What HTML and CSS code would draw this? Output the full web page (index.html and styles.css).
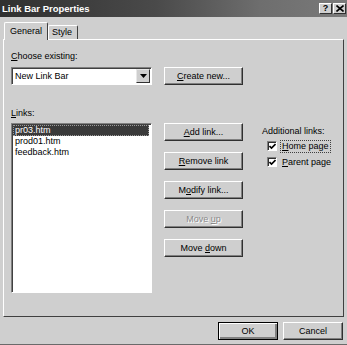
FILE: index.html
```html
<!DOCTYPE html>
<html lang="en">
<head>
    <meta charset="UTF-8">
    <title>Link Bar Properties</title>
    <link rel="stylesheet" href="styles.css">
</head>
<body>
    <div class="dialog">
        <!-- Title bar -->
        <div class="titlebar">
            <span class="title">Link Bar Properties</span>
            <div class="caption-btns">
                <span class="cap-btn">?</span>
                <span class="cap-btn close">
                    <svg width="8" height="7" viewBox="0 0 8 7"><path d="M0.5 0.5 L7.5 6.5 M7.5 0.5 L0.5 6.5" stroke="#000" stroke-width="1.6"/></svg>
                </span>
            </div>
        </div>

        <!-- Tabs -->
        <div class="tabs">
            <div class="tab active">General</div>
            <div class="tab">Style</div>
        </div>

        <div class="panel">
            <div class="label"><u>C</u>hoose existing:</div>
            <div class="spacer"></div>

            <div class="combo">
                <span class="combo-text">New Link Bar</span>
                <span class="combo-btn">
                    <svg width="7" height="4" viewBox="0 0 7 4"><path d="M0 0 H7 L3.5 4 Z" fill="#000"/></svg>
                </span>
            </div>
            <button class="btn create"><u>C</u>reate new...</button>

            <div class="label links-label"><u>L</u>inks:</div>
            <div class="spacer"></div>

            <div class="listbox">
                <div class="list-item selected">pr03.htm</div>
                <div class="list-item">prod01.htm</div>
                <div class="list-item">feedback.htm</div>
            </div>

            <div class="btn-col">
                <button class="btn"><u>A</u>dd link...</button>
                <button class="btn"><u>R</u>emove link</button>
                <button class="btn">M<u>o</u>dify link...</button>
                <button class="btn disabled">Move <u>u</u>p</button>
                <button class="btn">Move <u>d</u>own</button>
            </div>

            <div class="extra">
                <div class="extra-title">Additional links:</div>
                <div class="check-row">
                    <span class="checkbox">
                        <svg width="7" height="7" viewBox="0 0 7 7"><path d="M0.5 3 L2.5 5 L6.5 1" stroke="#000" stroke-width="1.6" fill="none"/></svg>
                    </span>
                    <span class="check-label focus"><u>H</u>ome page</span>
                </div>
                <div class="check-row">
                    <span class="checkbox">
                        <svg width="7" height="7" viewBox="0 0 7 7"><path d="M0.5 3 L2.5 5 L6.5 1" stroke="#000" stroke-width="1.6" fill="none"/></svg>
                    </span>
                    <span class="check-label"><u>P</u>arent page</span>
                </div>
            </div>
        </div>

        <!-- Footer buttons -->
        <div class="footer">
            <button class="btn default">OK</button>
            <button class="btn">Cancel</button>
        </div>
    </div>
</body>
</html>
```

FILE: styles.css
```css
body {
    margin: 0;
    font-family: "Liberation Sans", Arial, sans-serif;
    font-size: 9px;
    color: #000;
    background: #cfcfcf;
}
u {
    text-decoration: underline;
    text-underline-offset: 1px;
}
.dialog {
    width: 347px;
    height: 345px;
    box-sizing: border-box;
    background: #cfcfcf;
    border-bottom: 1px solid #6a6a6a;
}
.titlebar {
    height: 17px;
    display: flex;
    align-items: center;
    justify-content: space-between;
    background: linear-gradient(90deg, #303030, #4a4a4a 45%, #6e6e6e 75%, #7a7a7a);
}
.title {
    color: #fff;
    font-weight: bold;
    font-size: 9.5px;
    padding-left: 2px;
}
.caption-btns {
    display: flex;
    gap: 1px;
    padding-right: 1px;
}
.cap-btn {
    width: 13px;
    height: 11px;
    box-sizing: border-box;
    background: #cfcfcf;
    border: 1px solid;
    border-color: #fff #303030 #303030 #fff;
    font-weight: bold;
    font-size: 9px;
    line-height: 9px;
    text-align: center;
    display: flex;
    align-items: center;
    justify-content: center;
}
.tabs {
    display: flex;
    align-items: flex-end;
    padding: 6px 0 0 4px;
    height: 16px;
    position: relative;
    z-index: 1;
}
.tab {
    border: 1px solid;
    border-color: #fff #404040 transparent #fff;
    border-bottom: none;
    border-radius: 2px 2px 0 0;
    height: 14px;
    box-sizing: border-box;
    padding: 0 5px 0 3px;
    line-height: 13px;
    background: #cfcfcf;
}
.tab.active {
    height: 18px;
    padding: 0 5px;
    line-height: 16px;
    margin-bottom: -1px;
    border-right: 1px solid #404040;
}
.panel {
    margin: 0 3px;
    height: 278px;
    box-sizing: border-box;
    border: 1px solid;
    border-color: #fff #404040 #404040 #fff;
    padding: 10px 0 0 7px;
    display: grid;
    grid-template-columns: 141px 79px auto;
    grid-template-rows: 13px 19px 13px auto;
    column-gap: 12px;
    align-items: start;
}
.label {
    line-height: 13px;
}
.spacer {
    grid-column: 2 / 4;
}
.combo {
    margin-top: 4px;
    height: 18px;
    box-sizing: border-box;
    background: #fff;
    border: 1px solid;
    border-color: #808080 #fff #fff #808080;
    box-shadow: inset 1px 1px #404040;
    display: flex;
    align-items: center;
    justify-content: space-between;
    padding: 0 1px 0 3px;
}
.combo-btn {
    width: 14px;
    height: 14px;
    box-sizing: border-box;
    background: #cfcfcf;
    border: 1px solid;
    border-color: #e8e8e8 #303030 #303030 #e8e8e8;
    display: flex;
    align-items: center;
    justify-content: center;
}
.btn {
    font: inherit;
    color: #000;
    width: 79px;
    height: 18px;
    padding: 0;
    background: #cfcfcf;
    border: 1px solid;
    border-color: #fff #303030 #303030 #fff;
    box-shadow: inset -1px -1px #808080;
    text-align: center;
}
.btn.create {
    margin-top: 4px;
}
.btn.disabled {
    color: #8a8a8a;
    text-shadow: 1px 1px #fff;
}
.links-label {
    grid-row: 3;
    margin-top: 25px;
}
.listbox {
    grid-row: 4;
    margin-top: 28px;
    height: 170px;
    box-sizing: border-box;
    background: #fff;
    border: 1px solid;
    border-color: #808080 #fff #fff #808080;
    box-shadow: inset 1px 1px #404040;
    padding: 1px 2px 0 1px;
}
.list-item {
    line-height: 11px;
    padding-left: 2px;
}
.list-item.selected {
    background: #3a3a3a;
    color: #fff;
    outline: 1px dotted #9a9a9a;
    outline-offset: -1px;
}
.btn-col {
    grid-row: 4;
    margin-top: 28px;
    display: flex;
    flex-direction: column;
    gap: 11px;
}
.extra {
    grid-row: 4;
    margin: 30px 0 0 7px;
}
.extra-title {
    line-height: 13px;
}
.check-row {
    display: flex;
    align-items: center;
    height: 16px;
    padding-left: 5px;
    gap: 4px;
}
.checkbox {
    width: 10px;
    height: 10px;
    box-sizing: border-box;
    background: #fff;
    border: 1px solid;
    border-color: #808080 #fff #fff #808080;
    box-shadow: inset 1px 1px #303030;
    display: flex;
    align-items: center;
    justify-content: center;
}
.check-label {
    padding: 0 1px;
    line-height: 11px;
}
.check-label.focus {
    outline: 1px dotted #404040;
}
.footer {
    display: flex;
    justify-content: flex-end;
    gap: 5px;
    padding: 5px 4px 0 0;
}
.footer .btn {
    width: 60px;
}
.btn.default {
    border-color: #000;
    box-shadow: inset 1px 1px #fff, inset -2px -2px #808080;
}
```
